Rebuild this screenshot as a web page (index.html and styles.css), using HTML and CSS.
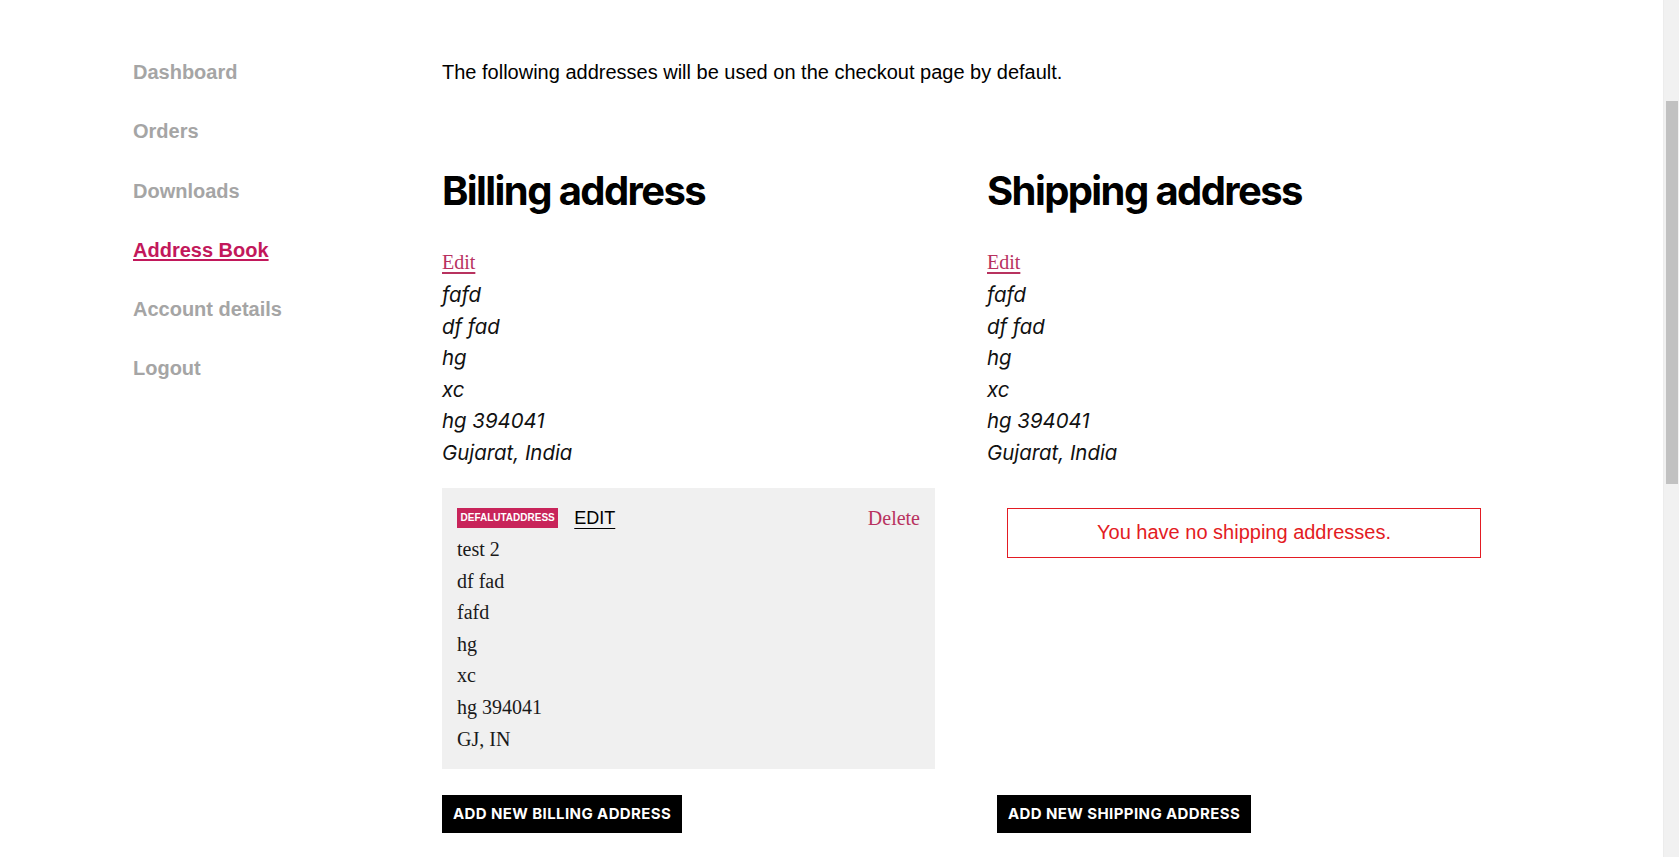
FILE: index.html
```html
<!DOCTYPE html>
<html lang="en">
<head>
<meta charset="utf-8">
<title>Address Book</title>
<link rel="stylesheet" href="styles.css">
</head>
<body>
<div class="account">
  <nav class="account-nav">
    <a class="nav-link" href="#">Dashboard</a>
    <a class="nav-link" href="#">Orders</a>
    <a class="nav-link" href="#">Downloads</a>
    <a class="nav-link is-active" href="#">Address Book</a>
    <a class="nav-link" href="#">Account details</a>
    <a class="nav-link" href="#">Logout</a>
  </nav>
  <main class="account-main">
    <p class="intro">The following addresses will be used on the checkout page by default.</p>
    <div class="addresses">
      <section class="addr-col">
        <h2 class="addr-title">Billing address</h2>
        <div class="addr-block">
          <a class="addr-edit" href="#">Edit</a>
          <address class="addr-lines">
            <span>fafd</span>
            <span>df fad</span>
            <span>hg</span>
            <span>xc</span>
            <span>hg 394041</span>
            <span>Gujarat, India</span>
          </address>
        </div>
        <div class="saved-card">
          <div class="saved-head">
            <span class="badge">DEFALUTADDRESS</span>
            <a class="saved-edit" href="#">EDIT</a>
            <a class="saved-delete" href="#">Delete</a>
          </div>
          <div class="saved-lines">
            <span>test 2</span>
            <span>df fad</span>
            <span>fafd</span>
            <span>hg</span>
            <span>xc</span>
            <span>hg 394041</span>
            <span>GJ, IN</span>
          </div>
        </div>
        <a class="btn btn-billing" href="#">ADD NEW BILLING ADDRESS</a>
      </section>
      <section class="addr-col">
        <h2 class="addr-title">Shipping address</h2>
        <div class="addr-block">
          <a class="addr-edit" href="#">Edit</a>
          <address class="addr-lines">
            <span>fafd</span>
            <span>df fad</span>
            <span>hg</span>
            <span>xc</span>
            <span>hg 394041</span>
            <span>Gujarat, India</span>
          </address>
        </div>
        <div class="notice">You have no shipping addresses.</div>
        <a class="btn btn-shipping" href="#">ADD NEW SHIPPING ADDRESS</a>
      </section>
    </div>
  </main>
</div>
<div class="scrollbar" aria-hidden="true"><div class="scrollbar-thumb"></div></div>
</body>
</html>
```

FILE: styles.css
```css
html, body {
  margin: 0;
  padding: 0;
  background: #ffffff;
}

body {
  font-family: "Liberation Sans", Arial, sans-serif;
  color: #000000;
}

.account {
  display: flex;
  padding-left: 133px;
  padding-top: 60px;
  padding-bottom: 40px;
}

.account-nav {
  width: 309px;
  flex: none;
  display: flex;
  flex-direction: column;
  gap: 35.3px;
}

.nav-link {
  font-size: 20px;
  line-height: 24px;
  font-weight: 700;
  color: #a5a5a5;
  text-decoration: none;
  align-self: flex-start;
}

.nav-link.is-active {
  color: #c2185b;
  text-decoration: underline;
  text-underline-offset: 2px;
}

.account-main {
  flex: none;
  width: 1039px;
}

.intro {
  margin: 0;
  font-size: 20px;
  line-height: 24px;
}

.addresses {
  display: grid;
  grid-template-columns: 493px 494px;
  column-gap: 52px;
  margin-top: 83.4px;
}

.addr-col {
  display: flex;
  flex-direction: column;
  align-items: flex-start;
}

.addr-title {
  margin: 0 0 32px;
  font-family: Inter, "Liberation Sans", sans-serif;
  font-weight: 700;
  font-size: 40px;
  line-height: 48px;
  letter-spacing: -1.6px;
}

.addr-block {
  display: flex;
  flex-direction: column;
  align-items: flex-start;
}

.addr-edit {
  font-family: "Liberation Serif", "Times New Roman", serif;
  font-size: 20px;
  line-height: 31.6px;
  color: #b8325f;
  text-decoration: underline;
  text-underline-offset: 3px;
}

.addr-lines {
  display: flex;
  flex-direction: column;
  font-family: Inter, "Liberation Sans", sans-serif;
  font-style: italic;
  font-size: 20.4px;
  line-height: 31.6px;
  color: #111111;
}

.saved-card {
  align-self: stretch;
  margin-top: 19.4px;
  background: #f0f0f0;
  padding: 15px 15px 13.6px;
}

.saved-head {
  display: flex;
  align-items: center;
  height: 31px;
}

.badge {
  background: #c8245a;
  color: #ffffff;
  font-family: "Liberation Sans", Arial, sans-serif;
  font-weight: 700;
  font-size: 10px;
  line-height: 20px;
  padding: 0 3.5px;
}

.saved-edit {
  margin-left: 16px;
  font-family: "Liberation Sans", Arial, sans-serif;
  font-size: 18px;
  color: #000000;
  text-decoration: underline;
  text-underline-offset: 4px;
}

.saved-delete {
  margin-left: auto;
  font-family: "Liberation Serif", "Times New Roman", serif;
  font-size: 20px;
  color: #b8325f;
  text-decoration: none;
}

.saved-lines {
  display: flex;
  flex-direction: column;
  font-family: "Liberation Serif", "Times New Roman", serif;
  font-size: 20px;
  line-height: 31.6px;
  color: #1a1a1a;
}

.notice {
  align-self: stretch;
  margin: 39.4px 0 0 20px;
  height: 50px;
  box-sizing: border-box;
  border: 1px solid #e31b23;
  color: #e31b23;
  font-size: 20px;
  display: flex;
  align-items: center;
  justify-content: center;
}

.btn {
  display: inline-flex;
  align-items: center;
  height: 38px;
  padding: 0 11px;
  background: #000000;
  color: #ffffff;
  font-family: Inter, "Liberation Sans", sans-serif;
  font-weight: 700;
  font-size: 15px;
  letter-spacing: 0.4px;
  text-decoration: none;
  white-space: nowrap;
}

.btn-billing {
  margin-top: 26px;
}

.btn-shipping {
  margin-top: auto;
  margin-left: 10px;
}

.scrollbar {
  position: fixed;
  top: 0;
  right: 0;
  width: 16px;
  height: 100vh;
  background: #f1f1f1;
  border-left: 1px solid #ececec;
  box-sizing: border-box;
}

.scrollbar-thumb {
  position: absolute;
  top: 101px;
  left: 2px;
  width: 12px;
  height: 383px;
  background: #c1c1c1;
}
```
